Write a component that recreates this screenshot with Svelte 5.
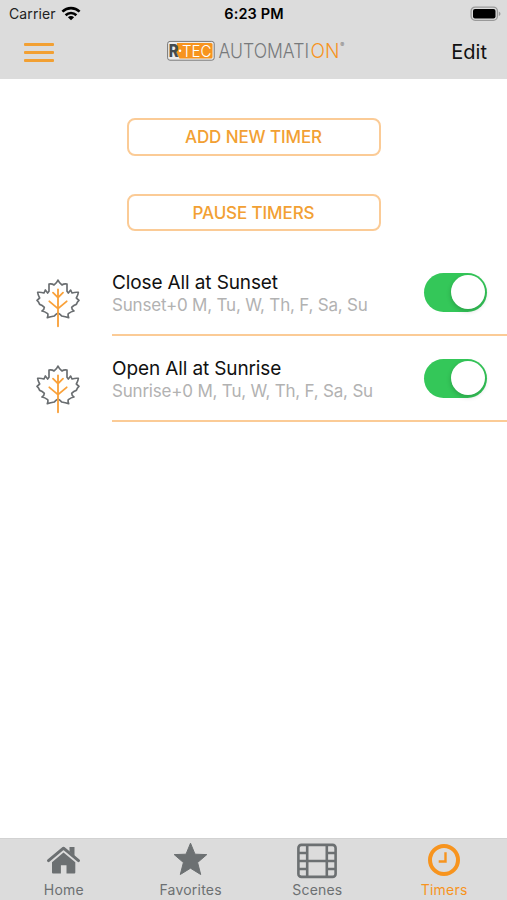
<script>
  let timers = $state([
    { id: 'sunset', name: 'Close All at Sunset', schedule: 'Sunset+0 M, Tu, W, Th, F, Sa, Su', enabled: true },
    { id: 'sunrise', name: 'Open All at Sunrise', schedule: 'Sunrise+0 M, Tu, W, Th, F, Sa, Su', enabled: true }
  ])

  const tabs = [
    { id: 'home', label: 'Home' },
    { id: 'favorites', label: 'Favorites' },
    { id: 'scenes', label: 'Scenes' },
    { id: 'timers', label: 'Timers' }
  ]

  let activeTab = $state('timers')
</script>

<div class="app">
  <header class="header">
    <div class="status">
      <div class="status__carrier">
        <span>Carrier</span>
        <svg class="status__wifi" viewBox="0 0 20 15">
          <g fill="none" stroke="#000" stroke-width="2.6">
            <path d="M1.4 5.6C6.3 1 13.7 1 18.6 5.6" />
            <path d="M4.6 9.2c3.1-2.9 7.7-2.9 10.8 0" />
          </g>
          <path d="M10 14.2 6.9 11.2c1.8-1.6 4.4-1.6 6.2 0z" />
        </svg>
      </div>
      <span class="status__time">6:23 PM</span>
      <svg class="status__battery" viewBox="0 0 32 16">
        <rect x="1.1" y="1.1" width="26.3" height="13.2" rx="4" fill="none" stroke="#999" stroke-width="1.3" />
        <rect x="3" y="3" width="22.5" height="9.4" rx="2" />
        <path d="M28.8 5.5c2.2 1 2.2 3.6 0 4.6z" fill="#999" />
      </svg>
    </div>

    <div class="nav">
      <button class="nav__menu" aria-label="Menu">
        <span></span>
        <span></span>
        <span></span>
      </button>
      <svg class="nav__logo" viewBox="0 0 180 24">
        <rect x="1.6" y="1.4" width="46.6" height="18.8" rx="2.4" fill="#ececec" stroke="#777" stroke-width="1" />
        <path d="M11 3h34q1.5 0 1.5 1.5v12.6q0 1.5-1.5 1.5H13.5L10 12z" fill="#f7941e" />
        <text class="nav__logo-r" x="2.8" y="17" textLength="9.8" lengthAdjust="spacingAndGlyphs">R</text>
        <circle cx="14" cy="10.8" r="1.3" fill="#fff" />
        <text class="nav__logo-tec" x="16" y="16.8" textLength="29.5" lengthAdjust="spacingAndGlyphs">TEC</text>
        <text class="nav__logo-name" x="52.5" y="17.6" textLength="90.5" lengthAdjust="spacingAndGlyphs">AUTOMATI</text>
        <text class="nav__logo-name nav__logo-name--on" x="144.5" y="17.6" textLength="29" lengthAdjust="spacingAndGlyphs">ON</text>
        <text class="nav__logo-mark" x="174.3" y="6.8">®</text>
      </svg>
      <button class="nav__edit">Edit</button>
    </div>
  </header>

  <main class="content">
    <div class="actions">
      <button class="actions__button">ADD NEW TIMER</button>
      <button class="actions__button">PAUSE TIMERS</button>
    </div>

    <ul class="timers">
      {#each timers as timer (timer.id)}
        <li class="timer">
          <svg class="timer__icon" viewBox="12 9 132 150" fill="none" stroke-linejoin="round" stroke-linecap="round">
            <path
              stroke="#6a6e71"
              stroke-width="5"
              d="M78 15Q74 25 66 30 60 25 51 27 51 38 51 49L47 54 40 45 36 54Q26 51 17 52 18 60 23 69L15 76Q20 80 23 88 31 90 37 97 37 104 30 108 38 109 47 116 49 121 46 128 56 125 67 123 71 117 78 114 85 117 89 123 100 125 110 128 107 121 109 116 118 109 126 108 119 104 119 97 125 90 133 88 136 80 141 76L133 69Q138 60 139 52 130 51 120 54L116 45 109 54 105 49Q105 38 105 27 96 25 90 30 82 25 78 15Z"
            />
            <path stroke="#f9a13a" stroke-width="5.5" d="M78 43V154M63 53 78 68 93 53M52 79 78 101 104 79" />
          </svg>
          <div class="timer__body">
            <div class="timer__text">
              <div class="timer__name">{timer.name}</div>
              <div class="timer__schedule">{timer.schedule}</div>
            </div>
            <button
              class="switch"
              class:switch--on={timer.enabled}
              role="switch"
              aria-checked={timer.enabled}
              aria-label={timer.name}
              onclick={() => (timer.enabled = !timer.enabled)}
            >
              <span class="switch__knob"></span>
            </button>
          </div>
        </li>
      {/each}
    </ul>
  </main>

  <nav class="tabbar">
    {#each tabs as tab}
      <button class="tabbar__tab" class:tabbar__tab--active={activeTab === tab.id} onclick={() => (activeTab = tab.id)}>
        <svg class="tabbar__icon" viewBox="0 0 42 38">
          {#if tab.id === 'home'}
            <path d="M27.5 5h5v9l-5-4.4z" fill="currentColor" />
            <path d="M6.5 18.6 21.5 6.2l15 12.4" fill="none" stroke="currentColor" stroke-width="3" stroke-linecap="round" stroke-linejoin="round" />
            <path d="M21.5 10.6 33.3 20.2v10.3q0 1-1 1h-7.8v-8.2h-5.6v8.2H11q-1 0-1-1V20.2z" fill="currentColor" />
          {:else if tab.id === 'favorites'}
            <path
              d="M21.5 1.2 26 12.2 37.8 12.6 28.6 20.5 31.7 32.5 21.5 26.2 11.3 32.5 14.4 20.5 5.2 12.6 17 12.2Z"
              fill="currentColor"
              stroke="currentColor"
              stroke-linejoin="round"
            />
          {:else if tab.id === 'scenes'}
            <g fill="none" stroke="currentColor" stroke-width="2.6">
              <rect x="2.4" y="2.9" width="37.2" height="32" rx="3" />
              <path d="M11.2 3v32M30.8 3v32M11.2 19h19.6M2 11h9.2M2 19h9.2M2 27h9.2M30.8 11H40M30.8 19H40M30.8 27H40" />
            </g>
          {:else}
            <circle cx="21" cy="18" r="14" fill="none" stroke="currentColor" stroke-width="4" />
            <path d="M22.5 10.3v9.2h-6.8" fill="none" stroke="currentColor" stroke-width="2.4" />
          {/if}
        </svg>
        <span class="tabbar__label">{tab.label}</span>
      </button>
    {/each}
  </nav>
</div>

<style>
  :global(body) {
    background-color: #fff;
  }

  .app {
    --accent: #f7941e;
    --accent-soft: #fbcb96;
    --bar: #dcdcdc;
    display: flex;
    flex-direction: column;
    width: 507px;
    height: 900px;
    overflow: hidden;
    font-family: Inter, 'Liberation Sans', sans-serif;
    color: #111;
    background-color: #fff;
  }

  button {
    padding: 0;
    font-family: inherit;
    color: inherit;
    background: none;
    border: none;
    cursor: pointer;
  }

  .header {
    flex: none;
    height: 79px;
    background-color: var(--bar);
  }

  .status {
    display: grid;
    grid-template-columns: 1fr auto 1fr;
    align-items: center;
    height: 27px;
    padding: 0 5px 0 9px;
    font-size: 14px;
    color: #222;
  }

  .status__carrier {
    display: flex;
    align-items: center;
    gap: 5px;
    letter-spacing: 0.1px;
  }

  .status__wifi {
    width: 20px;
    height: 15px;
  }

  .status__time {
    margin-right: 3px;
    font-size: 14.5px;
    font-weight: 600;
    color: #000;
    letter-spacing: 0.15px;
  }

  .status__battery {
    justify-self: end;
    width: 32px;
    height: 16px;
  }

  .nav {
    display: flex;
    align-items: center;
    height: 50px;
    padding: 0 20px 0 24px;
  }

  .nav__menu {
    display: flex;
    flex-direction: column;
    gap: 5px;
    width: 30px;
  }

  .nav__menu span {
    height: 3px;
    background-color: #f2a033;
    border-radius: 1px;
  }

  .nav__logo {
    width: 180px;
    height: 24px;
    margin-left: 112px;
  }

  .nav__logo-r {
    font-size: 17px;
    font-weight: 800;
    fill: #444b50;
  }

  .nav__logo-tec {
    font-size: 16.5px;
    font-weight: 300;
    fill: #fff;
  }

  .nav__logo-name {
    font-size: 20px;
    font-weight: 300;
    fill: #77797b;
  }

  .nav__logo-name--on {
    fill: var(--accent);
  }

  .nav__logo-mark {
    font-size: 6px;
    fill: #777;
  }

  .nav__edit {
    margin-left: auto;
    font-size: 20px;
  }

  .content {
    flex: 1;
  }

  .actions {
    display: flex;
    flex-direction: column;
    align-items: center;
    gap: 38px;
    padding-top: 39px;
  }

  .actions__button {
    width: 254px;
    height: 37.5px;
    padding-top: 1px;
    font-size: 17px;
    font-weight: 500;
    letter-spacing: -0.1px;
    color: #f2a033;
    border: 2px solid var(--accent-soft);
    border-radius: 8px;
  }

  .timers {
    margin: 19px 0 0;
    padding: 0;
    list-style: none;
  }

  .timer {
    display: flex;
    height: 86px;
  }

  .timer__icon {
    flex: none;
    width: 44px;
    height: 50px;
    margin: 28px 32px 0 36px;
  }

  .timer__body {
    flex: 1;
    display: flex;
    justify-content: space-between;
    padding: 21px 20px 0 0;
    border-bottom: 2px solid var(--accent-soft);
  }

  .timer__name {
    font-size: 19px;
    line-height: 23px;
    letter-spacing: -0.12px;
    white-space: nowrap;
  }

  .timer__schedule {
    font-size: 17px;
    line-height: 22px;
    letter-spacing: -0.2px;
    color: #b2b2b2;
    white-space: nowrap;
  }

  .switch {
    display: flex;
    width: 63px;
    height: 39px;
    margin-top: 1.5px;
    padding: 2.5px;
    background-color: #ddd;
    border-radius: 20px;
  }

  .switch--on {
    justify-content: flex-end;
    background-color: #34c759;
  }

  .switch__knob {
    width: 34px;
    height: 34px;
    background-color: #fff;
    border-radius: 50%;
    box-shadow: 0 2px 5px rgba(0, 0, 0, 0.2);
  }

  .tabbar {
    flex: none;
    display: grid;
    grid-template-columns: repeat(4, 1fr);
    height: 61px;
    border-top: 1px solid #d2d2d2;
    background-color: var(--bar);
  }

  .tabbar__tab {
    display: flex;
    flex-direction: column;
    align-items: center;
    padding-top: 3px;
    color: #6c7072;
  }

  .tabbar__tab--active {
    color: var(--accent);
  }

  .tabbar__icon {
    width: 42px;
    height: 38px;
  }

  .tabbar__label {
    padding-left: 1px;
    font-size: 14px;
    line-height: 19px;
    letter-spacing: 0.2px;
  }
</style>
